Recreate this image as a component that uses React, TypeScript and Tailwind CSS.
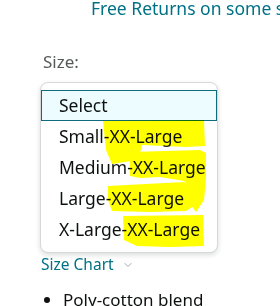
import { ChevronDown } from 'lucide-react';

const options = ['Small-XX-Large', 'Medium-XX-Large', 'Large-XX-Large', 'X-Large-XX-Large'];

const Marker = () => (
  <svg
    className="pointer-events-none absolute left-0 top-0 mix-blend-multiply"
    width={280}
    height={306}
    viewBox="0 0 280 306"
    aria-hidden="true"
  >
    <g fill="#ffff00">
      {/* top bar + stem of the 5 */}
      <path d="M103,121 L204,120 L205,146 L186,147 L142,145 L140,153 L131,161 L112,164 L106,150 Z" />
      {/* medium band + right side going down */}
      <path d="M130,152 L200,150 L206,153 L206,178 L204,200 L196,212 L190,204 L192,190 L184,181 L160,177 L140,178 L130,176 Z" />
      {/* large band */}
      <path d="M108,186 L184,182 L194,190 L194,206 L186,211 L150,212 L112,211 L108,200 Z" />
      {/* x-large band + tail */}
      <path d="M123,216 L203,215 L204,246 L170,247 L137,246 L124,240 Z" />
    </g>
  </svg>
);

export default function App() {
  return (
    <div className="relative h-[306px] w-[280px] overflow-hidden bg-white font-['Noto_Sans',sans-serif]">
      <div className="whitespace-nowrap pl-[91px] text-[17.5px] leading-[16px] text-[#007185]">
        Free Returns on some sizes and colors
      </div>
      <div className="mt-[34px] pl-[43px] text-[17px] leading-[23px] text-[#565959]">Size:</div>
      <div className="ml-[40px] mt-[9px] w-[178px] rounded-lg border border-[#d5d9d9] bg-white py-[7px] shadow-[0_2px_5px_rgba(15,17,17,0.15)]">
        <div className="flex h-[31px] items-center border border-[#0f6b7b] bg-[#edfdff] pl-[17px] text-[17.5px] text-[#0f1111]">
          Select
        </div>
        {options.map((o) => (
          <div key={o} className="flex h-[31px] items-center pl-[18px] text-[17.5px] text-[#0f1111]">
            {o}
          </div>
        ))}
      </div>
      <div className="mt-[1px] flex items-center gap-[8px] pl-[41px] text-[15.5px] leading-[21px] text-[#007185]">
        Size Chart
        <ChevronDown size={12} strokeWidth={2} className="text-[#a2a6ac]" />
      </div>
      <ul className="mt-[13px] list-disc pl-[63px] text-[17px] leading-[24px] text-[#0f1111]">
        <li>Poly-cotton blend</li>
      </ul>
      <Marker />
    </div>
  );
}
